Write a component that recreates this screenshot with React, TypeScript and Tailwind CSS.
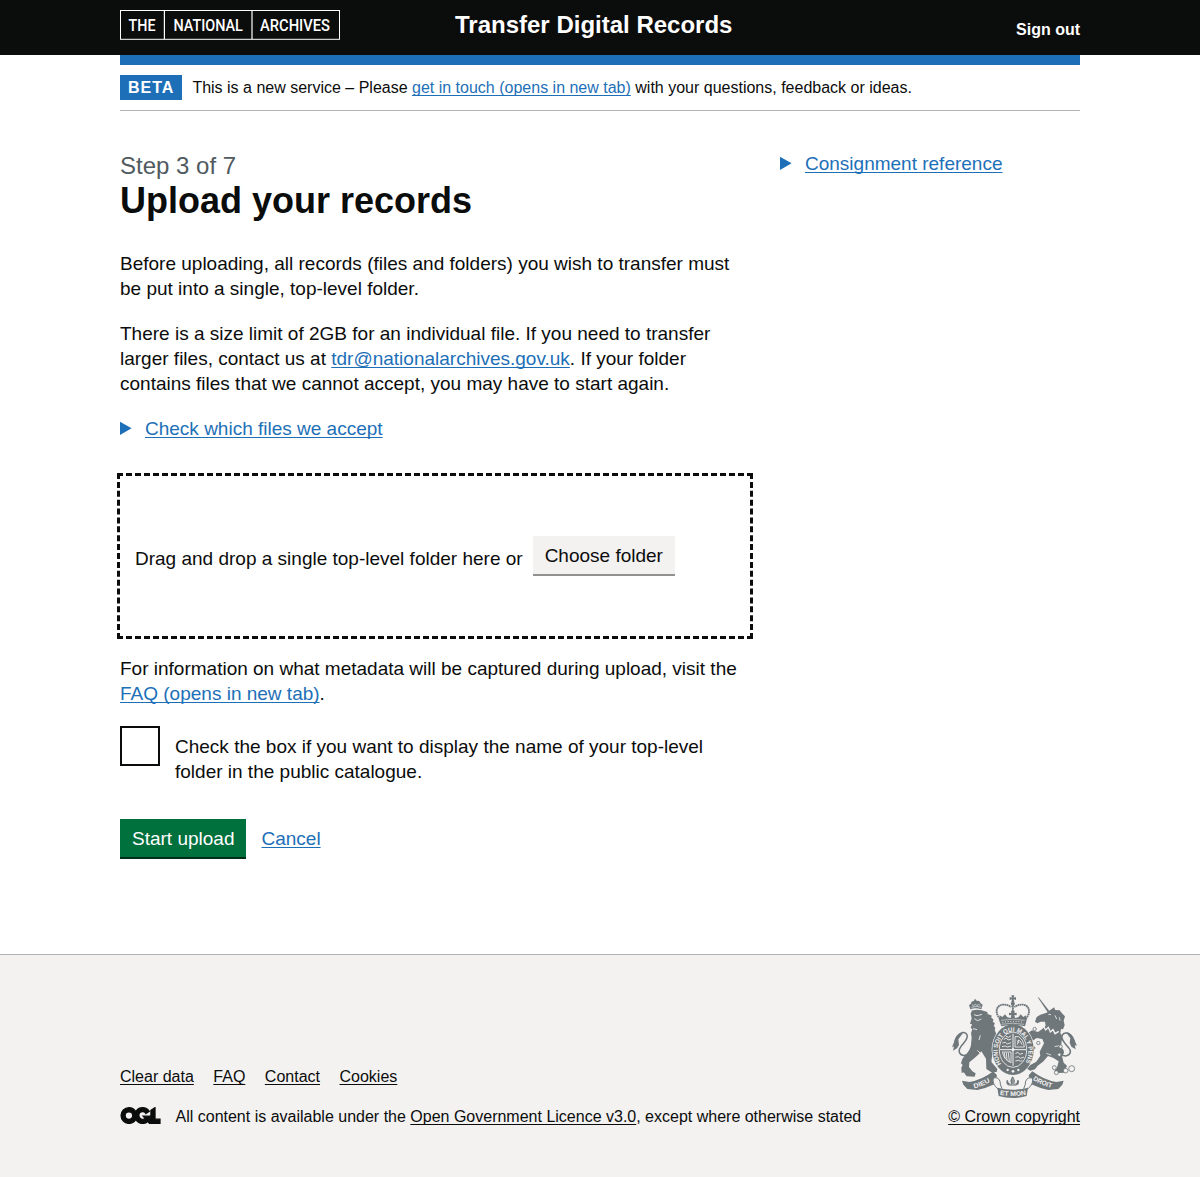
import type { ReactNode } from "react";

function Link({ children, dark = false, className = "" }: { children: ReactNode; dark?: boolean; className?: string }) {
  return (
    <a
      href="#"
      className={`underline decoration-1 underline-offset-[0.1em] [text-decoration-skip-ink:none] ${dark ? "text-[#0b0c0c]" : "text-[#1d70b8]"} ${className}`}
    >
      {children}
    </a>
  );
}

function ArchivesLogo() {
  return (
    <svg width="220" height="30" viewBox="0 0 220 30" fill="none" className="block" aria-label="The National Archives">
      <rect x="0.5" y="0.5" width="219" height="28.8" stroke="#fff" />
      <path d="M44.4 0v29M132 0v29" stroke="#fff" strokeWidth="1.2" />
      <g fill="#fff" fontFamily="Roboto, sans-serif" fontSize="16.6" fontWeight="500">
        <text x="8.5" y="21" textLength="27" lengthAdjust="spacingAndGlyphs">THE</text>
        <text x="53.4" y="21" textLength="69.5" lengthAdjust="spacingAndGlyphs">NATIONAL</text>
        <text x="140" y="21" textLength="70" lengthAdjust="spacingAndGlyphs">ARCHIVES</text>
      </g>
    </svg>
  );
}

function Disclosure({ children }: { children: ReactNode }) {
  return (
    <div className="flex items-center">
      <svg width="12" height="14" viewBox="0 0 12 14" className="mr-[13px] -mt-px shrink-0 fill-[#1d70b8]">
        <path d="M0 .7 11.600 7.300 0 13.900z" />
      </svg>
      <Link>{children}</Link>
    </div>
  );
}

function OglLogo() {
  return (
    <svg width="41" height="17" viewBox="-8 -8 499 211" className="-mt-[3px] mr-[14.5px] shrink-0 fill-[#0b0c0c] stroke-[#0b0c0c] stroke-[16]">
      <path d="M421.5 142.8V.1l-50.7 32.3v161.1h112.4v-50.7zm-122.3-9.6A47.12 47.12 0 0 1 221 97.8c0-26 21.1-47.1 47.1-47.1 16.7 0 31.4 8.7 39.7 21.8l42.7-27.2A97.63 97.63 0 0 0 268.1 0c-36.5 0-68.3 20.1-85.1 49.7A98 98 0 0 0 97.8 0C43.9 0 0 43.9 0 97.8s43.9 97.8 97.8 97.8c36.5 0 68.3-20.1 85.1-49.7a97.76 97.76 0 0 0 149.6 25.4l19.4 22.2h3v-87.8h-80l24.3 27.5zM97.8 145c-26 0-47.1-21.1-47.1-47.1s21.1-47.1 47.1-47.1 47.1 21.1 47.1 47.1S123.8 145 97.8 145" />
    </svg>
  );
}

function Crest() {
  const ink = "#6f777b";
  const paper = "#f3f2f1";
  return (
    <svg width="125" height="103" viewBox="36 29 375 309" fill={ink} className="block">
      {/* lion */}
      <path d="M91 72l-4-13 5-3 3-7 7-3 3-6 5 6 8 1 4 7 6 4-4 14q-17-6-33 0z" />
      <path d="M94 66q15-5 30 0M96 58l5 3 5-4 5 4 5-4 5 4" stroke={paper} strokeWidth="2" fill="none" />
      <path d="M94 76q18-5 36 0l12 4 1 6 13 5-3 5 8 7-3 5 7 7-4 5 5 9-2 5 5 12 3 15 8 12-12 14 1 9-9 1-2 12q-5 14-3 22l10 12 7 8-2 9h-17l-14-9-1-31-14-22q-10 13-23 22l-13 11-1 14 10 13 10 6-3 10-24-1-9-12-6 2-1-16 4-8-5-5 4-13 8-11q17-17 18-32l2-22-2-12 4-13-5-3 4-11-6-2 5-16-3-14 3-7-2-8z" />
      <path d="M102 88l9 3 5-1 10-3M103 100l10 6 11-5M99 130l12 3M121 150l-4 14M112 195l9 9" stroke={paper} strokeWidth="2.6" fill="none" />
      <path d="M88 205c-24 14-38-3-25-22 9-12 23-23 18-35-6-12-20-6-28 3-8 9-9 17-8 28" fill="none" stroke={ink} strokeWidth="4.500" />
      <path d="M46 160l-10 26 6-3-3 13 12-7 6-10-2-17 14-19q-14 0-23 17z" />

      {/* unicorn */}
      <path d="M293 36l4 1 34 44-5 4z" />
      <path d="M320 82l14-10 9-6 2 8 14 1 7 9 9 9-4 13 3 14-5 12-6-1-2 12q8 10 4 24l-2 18q10 9 9 18l-6 9 5 20 10 9-5 12-1 9-24 1-8-6 8-10 5-19-17-11-15-5-15 17-16 12-8 11-14 4-13-7 13-10 18-10 12-18-2-12 13-25-5-13-17-3-12 8 2 14 7 8-8 8-14-12-1-20-12-13-10-2-2-9 14-4 13 5 9-6 18 5 13-9 10-10-2-12-13 0-10 5-7-5 5-14 11-7z" />
      <path d="M308 118l9 16 8-8 6 14 8-7 6 12 11-7" stroke={paper} strokeWidth="4" fill="none" />
      <path d="M325 87l8 1M345 90l5 11M358 96l2 10M344 184l14-3M319 204l14 5" stroke={paper} strokeWidth="2.4" fill="none" />
      <path d="M361 207c22 12 38-3 25-20-10-12-26-26-19-38 8-12 24-4 31 8 5 8 7 14 6 24" fill="none" stroke={ink} strokeWidth="4.500" />
      <path d="M399 155l12 26-7-3 3 14-13-8-5-12 2-13-13-18q13 0 21 14z" />
      <g fill={paper} stroke={ink} strokeWidth="2.5">
        <circle cx="284" cy="131" r="5" />
        <circle cx="295" cy="173" r="5" />
        <circle cx="362" cy="184" r="5" />
        <circle cx="358" cy="208" r="5" />
        <circle cx="343" cy="247" r="6" />
        <circle cx="349" cy="262" r="6" />
        <circle cx="377" cy="256" r="7" />
        <circle cx="395" cy="250" r="9" />
      </g>

      {/* garter and quartered arms */}
      <ellipse cx="219" cy="193" rx="64" ry="78" fill={paper} />
      <ellipse cx="219" cy="193" rx="62" ry="76" />
      <ellipse cx="219" cy="193" rx="41" ry="53" fill="none" stroke={paper} strokeWidth="2.500" />
      <path id="garter" d="M184 236A46 59 0 1 1 254 236" fill="none" />
      <text fill={paper} fontFamily="Liberation Sans, Arial, sans-serif" fontWeight="700" fontSize="19">
        <textPath href="#garter" textLength="252" lengthAdjust="spacingAndGlyphs">HONI SOIT QUI MAL Y PENSE</textPath>
      </text>
      <path d="M219 145v96M180 193h78" stroke={paper} strokeWidth="3" />
      <g stroke={paper} strokeWidth="2.6" fill="none">
        <path d="M191 162l8-4 5 6 10-3M187 173l9-2 6 5 11-4M186 184l10-2 6 3 11-3M198 153l8 3 7-5" />
        <path d="M226 205l8-4 5 6 10-3M226 216l9-2 6 5 11-4M226 227l10-2 6 3 5-3" />
        <path d="M225 154h11q15 10 17 31h-28zM232 178l4-14 6 5 4 9M230 165l8 8" />
        <path d="M187 200h26v32q-20-7-26-32zM193 202l2 17M199 202l2 23M205 202l3 27" />
      </g>
      <g fill={paper}>
        <circle cx="219" cy="193" r="4" />
        <circle cx="203" cy="254" r="3.500" />
        <circle cx="219" cy="258" r="4" />
        <circle cx="235" cy="254" r="3.500" />
      </g>

      {/* royal crown */}
      <path d="M214 30h9l-2 7 7-2v9l-7-2 2 9h-9l2-9-7 2v-9l7 2z" />
      <circle cx="218.500" cy="55" r="6" />
      <g fill="none" stroke={ink} strokeWidth="5.500" strokeDasharray="5.500 1.200">
        <path d="M180 101c-25-29 0-57 34-36" />
        <path d="M257 101c25-29 0-57-34-36" />
        <path d="M218.500 60v24" />
      </g>
      <path d="M177 104l2-14 8 5 8-8 7 9 10 2 2-9-7 1v-8l7 1-1-7h11l-1 7 7-1v8l-7-1 2 9 10-2 7-9 8 8 8-5 2 14-5 19q-34-9-71 0z" />
      <path d="M183 105q35-7 71 0M184 117q34-7 68 0" fill="none" stroke={paper} strokeWidth="1.600" />
      <path d="M187 111q32-6 64 0" fill="none" stroke={paper} strokeWidth="3" strokeDasharray="3 5" />

      {/* motto scroll */}
      <path d="M66 286l22 4q38-6 72-32l11 12-8 27q-27 13-51 17l-30-3-12-13z" />
      <path d="M371 286l-22 4q-38-6-72-32l-11 12 8 27q27 13 51 17l30-3 12-13z" />
      <path d="M175 312q-20-16-15-34 15-4 20 10 0 10 6 22M262 312q20-16 15-34-15-4-20 10 0 10-6 22" fill={paper} stroke={ink} strokeWidth="3" />
      <path d="M172 307q46 12 92 0l-4 25q-42 12-84 0z" />
      <path d="M218 273q-11 11-4 22-8 1-9-5-1-8-5-5-4 13 9 16h18q13-3 9-16-6-3-5 5-1 6-9 5 7-11-4-22z" />
      <path d="M219 279v19M207 299h23" stroke={paper} strokeWidth="1.500" />
      <g fill={paper} fontFamily="Liberation Sans, Arial, sans-serif" fontWeight="700" fontSize="20">
        <path id="mottoLeft" d="M103 309Q131 302 158 284" fill="none" />
        <path id="mottoRight" d="M278 283Q307 302 342 309" fill="none" />
        <path id="mottoMid" d="M179 328Q219 336 260 328" fill="none" />
        <text><textPath href="#mottoLeft" textLength="52" lengthAdjust="spacingAndGlyphs">DIEU</textPath></text>
        <text><textPath href="#mottoRight" textLength="62" lengthAdjust="spacingAndGlyphs">DROIT</textPath></text>
        <text><textPath href="#mottoMid" textLength="80" lengthAdjust="spacingAndGlyphs">ET MON</textPath></text>
      </g>
    </svg>
  );
}

export default function App() {
  return (
    <div className="flex min-h-[1177px] flex-col bg-white font-['Liberation_Sans',Arial,sans-serif] text-[19px] leading-[25px] text-[#0b0c0c] antialiased">
      <header className="h-[55px] bg-[#0b0c0c] text-white">
        <div className="mx-auto grid h-full w-[960px] grid-cols-[335px_1fr_auto] pt-[10px]">
          <ArchivesLogo />
          <p className="text-2xl leading-[30px] font-bold">Transfer Digital Records</p>
          <a href="#" className="pt-[10px] text-base leading-5 font-bold">Sign out</a>
        </div>
      </header>

      <div className="mx-auto w-[960px]">
        <div className="h-[10px] bg-[#1d70b8]" />
        <div className="flex h-[46px] items-start border-b border-[#b1b4b6] pt-[10px] text-base leading-[25px]">
          <strong className="mr-[10px] h-[25px] bg-[#1d70b8] px-2 tracking-[1px] text-white">BETA</strong>
          <p>
            This is a new service – Please <Link>get in touch (opens in new tab)</Link> with your questions, feedback or ideas.
          </p>
        </div>

        <main className="flex pt-10">
          <div className="w-[630px]">
            <h1 className="text-4xl leading-10 font-bold">
              <span className="block text-2xl leading-[30px] font-normal text-[#505a5f]">Step 3 of 7</span>
              Upload your records
            </h1>
            <p className="mt-[30px]">
              Before uploading, all records (files and folders) you wish to transfer must be put into a single, top-level folder.
            </p>
            <p className="mt-5">
              There is a size limit of 2GB for an individual file. If you need to transfer larger files, contact us at{" "}
              <Link>tdr@nationalarchives.gov.uk</Link>. If your folder contains files that we cannot accept, you may have to start again.
            </p>
            <div className="mt-5">
              <Disclosure>Check which files we accept</Disclosure>
            </div>

            <div className="mt-[35px] flex h-40 items-start px-[15px] pt-[60px] outline-3 outline-dashed outline-[#0b0c0c]">
              <span className="mr-[10px] pt-[10px]">Drag and drop a single top-level folder here or</span>
              <button className="h-[38px] bg-[#f3f2f1] px-3 leading-[19px] shadow-[0_2px_0_#929191]">Choose folder</button>
            </div>

            <p className="mt-5">
              For information on what metadata will be captured during upload, visit the{" "}
              <Link>FAQ (opens in new tab)</Link>.
            </p>

            <label className="mt-5 flex">
              <input type="checkbox" className="size-10 shrink-0 appearance-none border-2 border-[#0b0c0c]" />
              <span className="w-[555px] pt-2 pl-[15px]">
                Check the box if you want to display the name of your top-level folder in the public catalogue.
              </span>
            </label>

            <div className="mt-[35px] flex items-start">
              <button className="mr-[15px] h-[38px] bg-[#00703c] px-3 text-white shadow-[0_2px_0_#002d18]">Start upload</button>
              <Link className="pt-[7px]">Cancel</Link>
            </div>
          </div>
          <aside className="ml-[30px]">
            <Disclosure>Consignment reference</Disclosure>
          </aside>
        </main>
      </div>

      <footer className="mt-auto h-[223px] border-t border-[#b1b4b6] bg-[#f3f2f1] text-base leading-5">
        <div className="mx-auto flex w-[960px] justify-between pt-10">
          <div className="pt-[72px]">
            <nav className="flex gap-[19.5px]">
              {["Clear data", "FAQ", "Contact", "Cookies"].map((label) => (
                <Link dark key={label}>{label}</Link>
              ))}
            </nav>
            <div className="mt-5 flex items-center">
              <OglLogo />
              <p>
                All content is available under the <Link dark>Open Government Licence v3.0</Link>, except where otherwise stated
              </p>
            </div>
          </div>
          <div className="flex flex-col items-end">
            <div className="mr-[3px] h-[112px]">
              <Crest />
            </div>
            <Link dark>© Crown copyright</Link>
          </div>
        </div>
      </footer>
    </div>
  );
}
